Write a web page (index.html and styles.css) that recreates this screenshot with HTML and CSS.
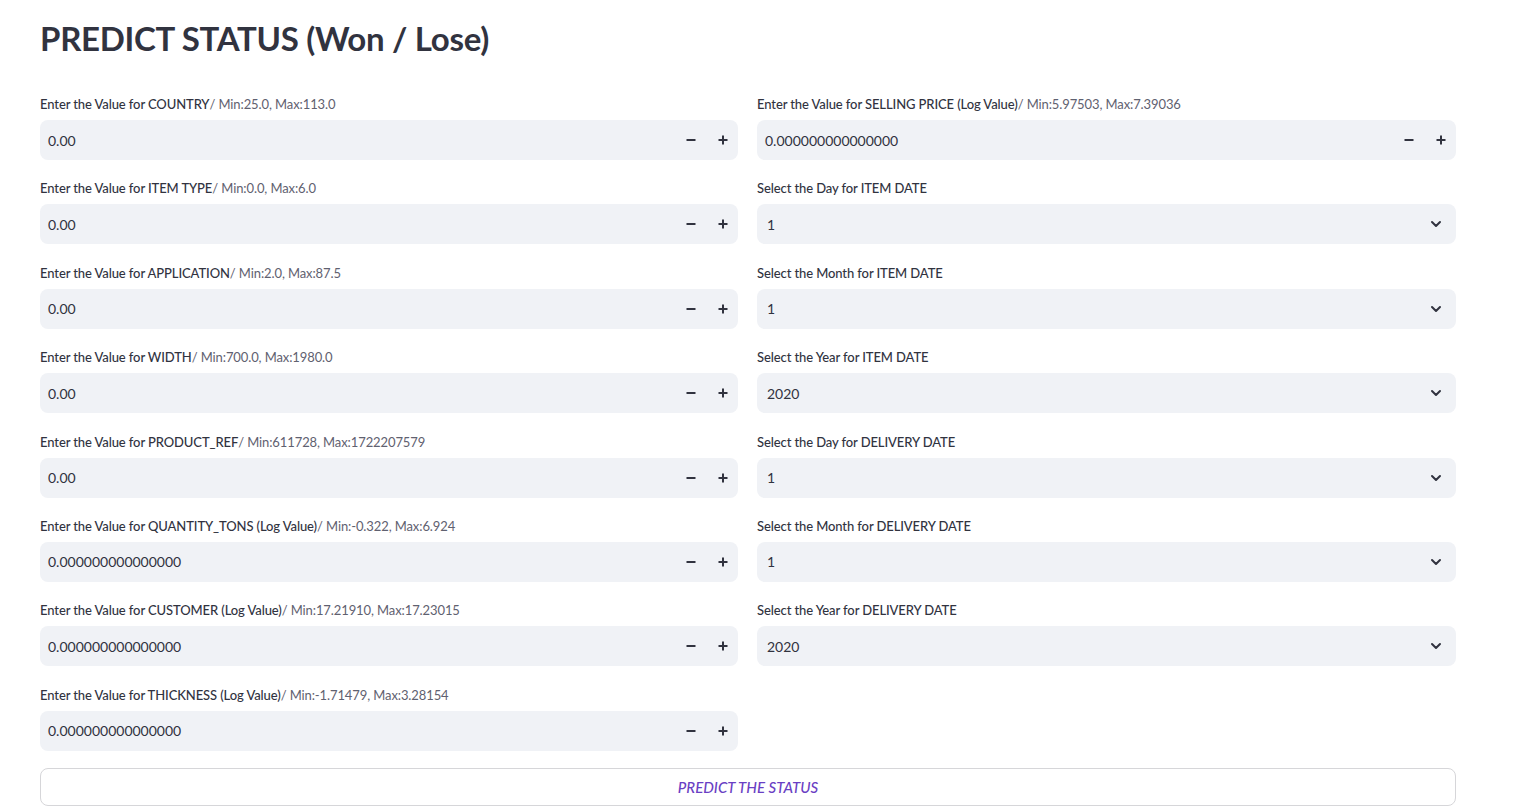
FILE: index.html
```html
<!DOCTYPE html>
<html>
<head>
<meta charset="utf-8">
<link rel="stylesheet" href="styles.css">
</head>
<body>
<div class="page">
  <h1 class="title">PREDICT STATUS (Won / Lose)</h1>
  <div class="cols">
    <div class="col">
      <div class="field">
        <label class="lbl"><span class="strong">Enter the Value for COUNTRY</span><span class="hint">/ Min:25.0, Max:113.0</span></label>
        <div class="num"><span class="val">0.00</span><span class="step"><svg viewBox="0 0 12 12" width="12" height="12"><path d="M1.5 6h9" stroke="#31333f" stroke-width="2"/></svg></span><span class="step"><svg viewBox="0 0 12 12" width="12" height="12"><path d="M1.5 6h9M6 1.5v9" stroke="#31333f" stroke-width="2"/></svg></span></div>
      </div>
      <div class="field">
        <label class="lbl"><span class="strong">Enter the Value for ITEM TYPE</span><span class="hint">/ Min:0.0, Max:6.0</span></label>
        <div class="num"><span class="val">0.00</span><span class="step"><svg viewBox="0 0 12 12" width="12" height="12"><path d="M1.5 6h9" stroke="#31333f" stroke-width="2"/></svg></span><span class="step"><svg viewBox="0 0 12 12" width="12" height="12"><path d="M1.5 6h9M6 1.5v9" stroke="#31333f" stroke-width="2"/></svg></span></div>
      </div>
      <div class="field">
        <label class="lbl"><span class="strong">Enter the Value for APPLICATION</span><span class="hint">/ Min:2.0, Max:87.5</span></label>
        <div class="num"><span class="val">0.00</span><span class="step"><svg viewBox="0 0 12 12" width="12" height="12"><path d="M1.5 6h9" stroke="#31333f" stroke-width="2"/></svg></span><span class="step"><svg viewBox="0 0 12 12" width="12" height="12"><path d="M1.5 6h9M6 1.5v9" stroke="#31333f" stroke-width="2"/></svg></span></div>
      </div>
      <div class="field">
        <label class="lbl"><span class="strong">Enter the Value for WIDTH</span><span class="hint">/ Min:700.0, Max:1980.0</span></label>
        <div class="num"><span class="val">0.00</span><span class="step"><svg viewBox="0 0 12 12" width="12" height="12"><path d="M1.5 6h9" stroke="#31333f" stroke-width="2"/></svg></span><span class="step"><svg viewBox="0 0 12 12" width="12" height="12"><path d="M1.5 6h9M6 1.5v9" stroke="#31333f" stroke-width="2"/></svg></span></div>
      </div>
      <div class="field">
        <label class="lbl"><span class="strong">Enter the Value for PRODUCT_REF</span><span class="hint">/ Min:611728, Max:1722207579</span></label>
        <div class="num"><span class="val">0.00</span><span class="step"><svg viewBox="0 0 12 12" width="12" height="12"><path d="M1.5 6h9" stroke="#31333f" stroke-width="2"/></svg></span><span class="step"><svg viewBox="0 0 12 12" width="12" height="12"><path d="M1.5 6h9M6 1.5v9" stroke="#31333f" stroke-width="2"/></svg></span></div>
      </div>
      <div class="field">
        <label class="lbl"><span class="strong">Enter the Value for QUANTITY_TONS (Log Value)</span><span class="hint">/ Min:-0.322, Max:6.924</span></label>
        <div class="num"><span class="val">0.000000000000000</span><span class="step"><svg viewBox="0 0 12 12" width="12" height="12"><path d="M1.5 6h9" stroke="#31333f" stroke-width="2"/></svg></span><span class="step"><svg viewBox="0 0 12 12" width="12" height="12"><path d="M1.5 6h9M6 1.5v9" stroke="#31333f" stroke-width="2"/></svg></span></div>
      </div>
      <div class="field">
        <label class="lbl"><span class="strong">Enter the Value for CUSTOMER (Log Value)</span><span class="hint">/ Min:17.21910, Max:17.23015</span></label>
        <div class="num"><span class="val">0.000000000000000</span><span class="step"><svg viewBox="0 0 12 12" width="12" height="12"><path d="M1.5 6h9" stroke="#31333f" stroke-width="2"/></svg></span><span class="step"><svg viewBox="0 0 12 12" width="12" height="12"><path d="M1.5 6h9M6 1.5v9" stroke="#31333f" stroke-width="2"/></svg></span></div>
      </div>
      <div class="field">
        <label class="lbl"><span class="strong">Enter the Value for THICKNESS (Log Value)</span><span class="hint">/ Min:-1.71479, Max:3.28154</span></label>
        <div class="num"><span class="val">0.000000000000000</span><span class="step"><svg viewBox="0 0 12 12" width="12" height="12"><path d="M1.5 6h9" stroke="#31333f" stroke-width="2"/></svg></span><span class="step"><svg viewBox="0 0 12 12" width="12" height="12"><path d="M1.5 6h9M6 1.5v9" stroke="#31333f" stroke-width="2"/></svg></span></div>
      </div>
    </div>
    <div class="col">
      <div class="field">
        <label class="lbl"><span class="strong">Enter the Value for SELLING PRICE (Log Value)</span><span class="hint">/ Min:5.97503, Max:7.39036</span></label>
        <div class="num"><span class="val">0.000000000000000</span><span class="step"><svg viewBox="0 0 12 12" width="12" height="12"><path d="M1.5 6h9" stroke="#31333f" stroke-width="2"/></svg></span><span class="step"><svg viewBox="0 0 12 12" width="12" height="12"><path d="M1.5 6h9M6 1.5v9" stroke="#31333f" stroke-width="2"/></svg></span></div>
      </div>
      <div class="field">
        <label class="lbl"><span class="strong">Select the Day for ITEM DATE</span></label>
        <div class="sel"><span class="sval">1</span><svg class="chev" viewBox="0 0 24 24" width="16" height="16"><path d="M6 9l6 6 6-6" fill="none" stroke="#31333f" stroke-width="3" stroke-linecap="round" stroke-linejoin="round"/></svg></div>
      </div>
      <div class="field">
        <label class="lbl"><span class="strong">Select the Month for ITEM DATE</span></label>
        <div class="sel"><span class="sval">1</span><svg class="chev" viewBox="0 0 24 24" width="16" height="16"><path d="M6 9l6 6 6-6" fill="none" stroke="#31333f" stroke-width="3" stroke-linecap="round" stroke-linejoin="round"/></svg></div>
      </div>
      <div class="field">
        <label class="lbl"><span class="strong">Select the Year for ITEM DATE</span></label>
        <div class="sel"><span class="sval">2020</span><svg class="chev" viewBox="0 0 24 24" width="16" height="16"><path d="M6 9l6 6 6-6" fill="none" stroke="#31333f" stroke-width="3" stroke-linecap="round" stroke-linejoin="round"/></svg></div>
      </div>
      <div class="field">
        <label class="lbl"><span class="strong">Select the Day for DELIVERY DATE</span></label>
        <div class="sel"><span class="sval">1</span><svg class="chev" viewBox="0 0 24 24" width="16" height="16"><path d="M6 9l6 6 6-6" fill="none" stroke="#31333f" stroke-width="3" stroke-linecap="round" stroke-linejoin="round"/></svg></div>
      </div>
      <div class="field">
        <label class="lbl"><span class="strong">Select the Month for DELIVERY DATE</span></label>
        <div class="sel"><span class="sval">1</span><svg class="chev" viewBox="0 0 24 24" width="16" height="16"><path d="M6 9l6 6 6-6" fill="none" stroke="#31333f" stroke-width="3" stroke-linecap="round" stroke-linejoin="round"/></svg></div>
      </div>
      <div class="field">
        <label class="lbl"><span class="strong">Select the Year for DELIVERY DATE</span></label>
        <div class="sel"><span class="sval">2020</span><svg class="chev" viewBox="0 0 24 24" width="16" height="16"><path d="M6 9l6 6 6-6" fill="none" stroke="#31333f" stroke-width="3" stroke-linecap="round" stroke-linejoin="round"/></svg></div>
      </div>
    </div>
  </div>
  <button class="btn">PREDICT THE STATUS</button>
</div>
</body>
</html>
```
FILE: styles.css
```css
* { box-sizing: border-box; }
html, body { margin: 0; padding: 0; background: #ffffff; }
body { font-family: "Lato", "Open Sans", sans-serif; color: #31333f; }
.page { width: 1416px; margin-left: 40px; padding-top: 12px; }
.title { margin: 0; font-size: 33px; font-weight: 700; line-height: 52px; height: 80px; letter-spacing: -0.3px; color: #31333f; }
.cols { display: grid; grid-template-columns: 698px 699px; column-gap: 19px; }
.col { display: flex; flex-direction: column; gap: 16.4px; }
.field { display: flex; flex-direction: column; }
.lbl { height: 24px; display: flex; align-items: center; margin-bottom: 4px; font-size: 13px; letter-spacing: -0.1px; }
.strong { color: #31333f; font-weight: 500; }
.hint { color: #5f6170; }
.num { height: 40px; background: #f0f2f6; border-radius: 8px; display: flex; align-items: center; }
.val { flex: 1; padding-left: 8px; font-size: 14px; }
.step { width: 32px; height: 100%; display: flex; align-items: center; justify-content: center; }
.step:last-child { width: 31px; }
.step svg { display: block; }
.sel { height: 40px; background: #f0f2f6; border-radius: 8px; display: flex; align-items: center; padding: 0 12px 0 10px; }
.sval { flex: 1; font-size: 14px; }
.chev { display: block; }
.btn { display: block; width: 1416px; height: 38px; margin-top: 17px; background: #fff; border: 1px solid #d6d6d9; border-radius: 8px; font-family: "Lato", sans-serif; font-style: italic; font-size: 15px; font-weight: 500; color: #6a3fc4; }
```
